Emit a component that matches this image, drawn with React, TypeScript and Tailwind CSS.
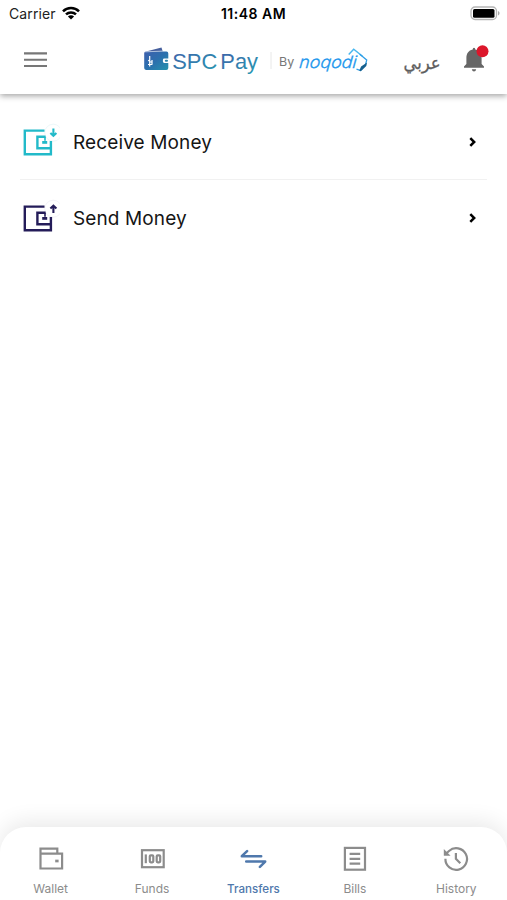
import React from 'react';

function StatusBar() {
  return (
    <div className="grid h-7 grid-cols-3 items-center pl-[9px] pr-[7px] text-[14px] leading-none text-[#222]">
      <div className="flex items-center gap-[6px]">
        <span className="tracking-[0.12px]">Carrier</span>
        <svg className="-mt-[2px]" width="18" height="14" viewBox="0 0 18 14" fill="none" stroke="#000" strokeWidth="2.5">
          <path d="M1 5.3C5.4.8 12.6.8 17 5.3" />
          <path d="M4 8.4c2.8-2.7 7.2-2.7 10 0" />
          <path d="M9 13.6 5.9 10.5c1.7-1.6 4.5-1.6 6.2 0z" fill="#000" stroke="none" />
        </svg>
      </div>
      <div className="-ml-[2px] whitespace-nowrap text-center text-[14px] font-semibold tracking-[0.5px] text-black">11:48 AM</div>
      <div className="flex justify-end">
        <svg className="-mt-[2px]" width="30" height="15" viewBox="0 0 30 15">
          <rect x="1" y="1" width="25.5" height="12.5" rx="4" fill="#fff" stroke="#b5b5b5" strokeWidth="1.3" />
          <rect x="3" y="3" width="21.5" height="8.7" rx="1.5" fill="#000" />
          <path d="M28 5v4.5c2-.8 2-3.7 0-4.5" fill="#aaa" />
        </svg>
      </div>
    </div>
  );
}

function Logo() {
  return (
    <svg className="block" width="228" height="34" viewBox="142 44 228 34" role="img" aria-label="SPC Pay by noqodi">
      <defs>
        <linearGradient id="wallet" x1="0" y1="0" x2="1" y2="1">
          <stop offset="0" stopColor="#3d5fad" />
          <stop offset="0.5" stopColor="#2c70ad" />
          <stop offset="1" stopColor="#2493ae" />
        </linearGradient>
        <linearGradient id="brand" x1="0" y1="0" x2="1" y2="1">
          <stop offset="0" stopColor="#405fa9" />
          <stop offset="1" stopColor="#279bb2" />
        </linearGradient>
      </defs>
      <path d="M146 51.5 161.5 47.6l1.2 3.9z" fill="#465f9d" />
      <path d="M146 51.6h20.5q1.8 0 1.8 1.8v5.1h-4q-1.4 0-1.4 1.4v1.6q0 1.4 1.4 1.4h4v5q0 2-2 2H146q-1.8 0-1.8-1.8V53.2q0-1.6 1.8-1.6" fill="url(#wallet)" />
      <path d="M145.2 51.9 162.7 51" stroke="#d9e6f1" strokeWidth=".6" />
      <rect x="164.8" y="59.7" width="3.2" height="2" rx="1" fill="#2f86ac" />
      <path d="M149.7 56v10.5M148.2 60.2l2 1.4M148 64.5h4.3M152 60v4.4M149.8 62h2.2" stroke="#fff" strokeWidth="1.2" fill="none" />
      <text x="172.2" y="69.4" fontSize="22.8" fontFamily="'Liberation Sans', Arial, sans-serif" fill="url(#brand)" textLength="45" lengthAdjust="spacingAndGlyphs">SPC</text>
      <text x="220.3" y="69.4" fontSize="22.8" fontFamily="'Liberation Sans', Arial, sans-serif" fill="url(#brand)" textLength="37.7" lengthAdjust="spacingAndGlyphs">Pay</text>
      <path d="M271 52v17" stroke="#e8e8e8" />
      <text x="279" y="66.2" fontSize="12.2" fontFamily="Inter, sans-serif" fill="#777" textLength="15.2" lengthAdjust="spacingAndGlyphs">By</text>
      <text transform="translate(298.8 67.8) skewX(-6)" fontSize="17" fontFamily="Inter, sans-serif" fontStyle="italic" fontWeight="300" fill="#2197ed" stroke="#2197ed" strokeWidth=".3" textLength="57.5" lengthAdjust="spacingAndGlyphs">noqodi</text>
      <path d="m348.7 54.5 5-5.3 8.8 7" fill="none" stroke="#48b7ef" strokeWidth="1.4" />
      <path d="m359.8 54.2 6.9 5.9-1.4 5.2-4.8 5.3-4-1.4" fill="none" stroke="#2d9de6" strokeWidth="1.3" />
      <path d="m367 62.6-.7 3.4-5.5 5.3-1.5-.9 1.8-4z" fill="#17608e" />
    </svg>
  );
}

function Header() {
  return (
    <header className="relative z-10 h-[94px] bg-white shadow-[0_2px_6px_rgba(0,0,0,0.36)]">
      <StatusBar />
      <div className="flex h-[66px] items-start">
        <svg className="ml-6 mt-[24px]" width="23" height="16" viewBox="0 0 23 16" stroke="#777" strokeWidth="2.1">
          <path d="M0 1.4h23M0 7.7h23M0 14h23" />
        </svg>
        <div className="ml-[95px] mt-4"><Logo /></div>
        <svg className="ml-[31px] mt-[22px]" width="44" height="30" viewBox="401 50 44 30">
          <text x="440.5" y="69" fontSize="18" fontFamily="'DejaVu Sans', sans-serif" fill="#5e5e5e" stroke="#5e5e5e" strokeWidth=".3" direction="rtl" textLength="37" lengthAdjust="spacingAndGlyphs">عربي</text>
        </svg>
        <svg className="ml-[17px] mt-4" width="30" height="30" viewBox="462 44 30 30">
          <path d="M474 47.7q1.3 0 1.3 1.8c4.2.8 6.3 4.2 6.3 8.4v6l2.4 2.7v1.2h-20v-1.2l2.4-2.7v-6c0-4.2 2.1-7.6 6.3-8.4q0-1.8 1.3-1.8M471.8 69.3h4.4q-.4 2.3-2.2 2.3t-2.2-2.3" fill="#666" />
          <circle cx="482.5" cy="51.2" r="6" fill="#dc172b" />
        </svg>
      </div>
    </header>
  );
}

function TransferRow({ label, send = false }: { label: string; send?: boolean }) {
  const color = send ? '#241c59' : '#22bac9';
  return (
    <button className="flex h-[75px] w-full items-center text-left">
      <svg width="40" height="40" viewBox="20 122.5 40 40" fill="none" stroke={color}>
        <circle cx="53.2" cy="133.2" r="8.5" stroke={send ? '#f4f3f8' : '#edf8fa'} strokeWidth="1" />
        <path d="M44.5 131.1H24.8v23.6h26.1v-13.2" strokeWidth="2.4" />
        <path d="M45.6 137.2h-8.2v11.6h13.5" strokeWidth="2.4" />
        <path d="M45 137.2v4" strokeWidth="1.6" />
        <path d="M42.2 142.9h5" strokeWidth="2.8" />
        {send
          ? <path d="M53.4 137.4v-7m-3 2.6 3-2.9 3 2.9" strokeWidth="2.1" />
          : <path d="M53.4 129v7m-3-2.6 3 2.9 3-2.9" strokeWidth="2.1" />}
      </svg>
      <span className="ml-[13px] flex-1 pt-[3px] text-[19px] tracking-[0.12px] text-[#151515]">{label}</span>
      <svg className="mr-[11px]" width="8" height="12" viewBox="0 0 8 12" fill="none" stroke="#000" strokeWidth="2.5">
        <path d="m2.3 2.1 3.9 3.9-3.9 3.9" />
      </svg>
    </button>
  );
}

const iconPaths: Record<string, React.ReactNode> = {
  Wallet: <><path d="M4.5 9.8V4.7h16.8v4.9M4.5 9.6h21.6v14.9H4.5V8" /><path d="M19.2 17h3.4" strokeWidth="2.7" /></>,
  Funds: <><rect x="4" y="6.2" width="21.7" height="17" /><path d="M7.8 10.4v8.8" /><rect x="11.8" y="11.3" width="3.5" height="7" rx="1" /><rect x="18.7" y="11.3" width="3.5" height="7" rx="1" /></>,
  Transfers: <path d="M22.2 12.2H2.8l5.3-5.1M7.2 17.6h19l-5.3 5.3" strokeWidth="2.5" strokeLinecap="round" strokeLinejoin="round" />,
  Bills: <><rect x="4.9" y="3.9" width="20.1" height="21.8" /><path d="M9.6 9.9h10.6M9.6 14.8h10.6M9.6 19.7h10.6" /></>,
  History: <><path d="M3.4 14.8A10.8 10.8 0 1 0 7 7L3.9 9.8" /><path d="M1.8 4.9v6.8h6.8z" fill="#8c8c8c" stroke="none" /><path d="M13.9 8.9v6l4.4 4.3" /></>,
};

function BottomNav() {
  return (
    <nav className="grid h-[73px] grid-cols-5 rounded-t-[26px] bg-white shadow-[0_-5px_22px_rgba(0,0,0,0.09)]">
      {Object.keys(iconPaths).map((label) => {
        const selected = label === 'Transfers';
        return (
          <button key={label} className={`flex flex-col items-center pt-[17px] ${selected ? 'text-[#4f78ac]' : 'text-[#8c8c8c]'}`}>
            <svg width="29" height="30" viewBox="0 0 29 30" fill="none" stroke="currentColor" strokeWidth="2.2">{iconPaths[label]}</svg>
            <span className={`leading-[15px] ${selected ? 'mt-[8px] text-[11.6px] font-medium' : 'mt-[7px] text-[12px]'}`}>{label}</span>
          </button>
        );
      })}
    </nav>
  );
}

export default function App() {
  return (
    <div className="flex h-[900px] w-[507px] flex-col overflow-hidden bg-white font-[Inter,sans-serif]">
      <Header />
      <main className="flex-1 px-5 pt-[10px]">
        <div className="border-b border-[#f1f1f1]"><TransferRow label="Receive Money" /></div>
        <div><TransferRow label="Send Money" send /></div>
      </main>
      <BottomNav />
    </div>
  );
}
